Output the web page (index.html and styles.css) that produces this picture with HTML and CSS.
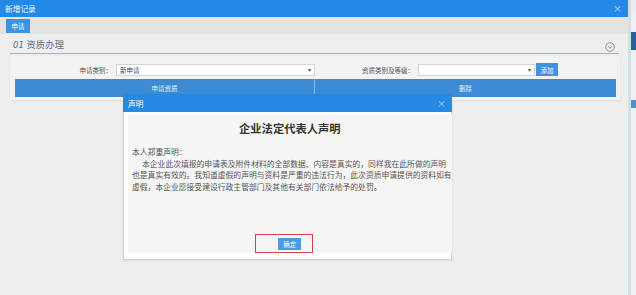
FILE: index.html
```html
<!DOCTYPE html>
<html lang="zh">
<head>
<meta charset="utf-8">
<title>新增记录</title>
<link rel="stylesheet" href="styles.css">
</head>
<body>
<div class="app">
  <div class="window">
    <div class="titlebar"><span>新增记录</span><span class="close">×</span></div>
    <div class="toolbar"><button class="btn-apply">申请</button></div>
    <div class="content">
      <div class="panel-head">
        <span class="panel-title"><i>01</i> 资质办理</span>
        <svg class="chev" width="10" height="10" viewBox="0 0 10 10"><circle cx="5" cy="5" r="4.3" fill="none" stroke="#6b8fb8" stroke-width="0.9"/><path d="M3 4.2 L5 6.2 L7 4.2" fill="none" stroke="#6b8fb8" stroke-width="0.9"/></svg>
      </div>
      <div class="panel-body">
        <div class="form-row">
          <label class="lbl lbl1">申请类别：</label>
          <div class="select sel1"><span>新申请</span><span class="arr">▾</span></div>
          <label class="lbl lbl2">资质类别及等级：</label>
          <div class="select sel2"><span></span><span class="arr">▾</span></div>
          <button class="btn-add">添加</button>
        </div>
        <div class="table-head">
          <div class="th th1">申请资质</div>
          <div class="th th2">删除</div>
        </div>
      </div>
    </div>
  </div>
  <div class="side">
    <div class="s-top"></div>
    <div class="s-gap1"></div>
    <div class="s-dark"></div>
    <div class="s-gap2"></div>
    <div class="s-mid"></div>
  </div>

  <div class="modal">
    <div class="modal-head"><span>声明</span><span class="close">×</span></div>
    <div class="modal-body">
      <div class="modal-inner">
        <h1 class="heading">企业法定代表人声明</h1>
        <div class="decl">
          <div class="line">本人郑重声明：</div>
          <div class="line indent">本企业此次填报的申请表及附件材料的全部数据、内容是真实的，同样我在此所做的声明</div>
          <div class="line">也是真实有效的。我知道虚假的声明与资料是严重的违法行为，此次资质申请提供的资料如有</div>
          <div class="line">虚假，本企业愿接受建设行政主管部门及其他有关部门依法给予的处罚。</div>
        </div>
        <div class="footer">
          <div class="mark"><button class="btn-ok">确定</button></div>
        </div>
      </div>
    </div>
  </div>
</div>
</body>
</html>
```

FILE: styles.css
```css
* { box-sizing: border-box; }
html, body { margin: 0; padding: 0; }
body {
  background: #eeeeee;
  font-family: "Noto Sans CJK SC", "Noto Sans", sans-serif;
  color: #333;
  width: 636px;
  height: 295px;
  overflow: hidden;
}
.app {
  position: relative;
  display: flex;
  width: 636px;
  height: 295px;
}
.window {
  width: 631px;
  height: 295px;
  border-right: 3px solid #cfe2e2;
  display: flex;
  flex-direction: column;
  background: #eeeeee;
}
.titlebar {
  height: 17px;
  background: #2389e7;
  color: #f2f7fd;
  font-size: 7.7px;
  display: flex;
  align-items: center;
  justify-content: space-between;
  padding: 0 6px 0 5px;
}
.titlebar .close { font-size: 9px; color: #cfe3f8; }
.toolbar {
  height: 17px;
  background: #e4e2e2;
  display: flex;
  align-items: center;
  padding-left: 6px;
}
button {
  border: 0;
  margin: 0;
  padding: 0;
  font-family: inherit;
  color: #fff;
  cursor: pointer;
}
.btn-apply {
  width: 24px;
  height: 14px;
  background: #3f93de;
  font-size: 6.5px;
}
.content {
  padding: 0 10px 0 10px;
}
.panel-head {
  height: 20px;
  border-bottom: 1px solid #a7b2bd;
  display: flex;
  align-items: center;
  justify-content: space-between;
  padding: 0 4px 0 3px;
  margin-right: -1px;
}
.panel-title {
  font-size: 9.2px;
  color: #5b6e86;
  letter-spacing: 0.2px;
}
.panel-title i { font-family: "DejaVu Sans", sans-serif; font-size: 8.5px; }
.chev { margin-top: 6px; }
.panel-body {
  margin-top: 2px;
  background: #f3f3f3;
  box-shadow: 0 1px 2px rgba(0,0,0,0.08);
  padding: 6px 4px 3px 5px;
  width: 610px;
}
.form-row {
  display: flex;
  align-items: center;
  height: 15px;
}
.lbl {
  font-size: 6.5px;
  color: #555;
  text-align: right;
}
.lbl1 { width: 97px; }
.lbl2 { width: 99px; }
.select {
  height: 12px;
  background: #fff;
  border: 1px solid #d4d4d4;
  display: flex;
  align-items: center;
  justify-content: space-between;
  font-size: 6.5px;
  color: #444;
  padding: 0 3px 0 3px;
}
.sel1 { width: 199px; margin-left: 4px; }
.sel2 { width: 117px; margin-left: 4px; }
.arr { font-size: 6px; color: #555; }
.btn-add {
  width: 22px;
  height: 13px;
  background: #3f93de;
  font-size: 6.5px;
  margin-left: 1px;
}
.table-head {
  margin-top: 2px;
  height: 18px;
  background: #3c8bd4;
  display: flex;
  width: 601px;
}
.th {
  color: #e7f0fa;
  font-size: 6.5px;
  display: flex;
  align-items: center;
  justify-content: center;
}
.th1 { width: 300px; border-right: 1px solid #8ab6e2; }
.th2 { flex: 1; }

.side {
  width: 5px;
  display: flex;
  flex-direction: column;
  background: #f1eff3;
}
.s-top { height: 11px; background: #e9edf3; }
.s-gap1 { height: 21px; }
.s-dark { height: 18px; background: #24609e; }
.s-gap2 { height: 50px; }
.s-mid { height: 8px; background: #4e8fcf; }

.modal {
  position: absolute;
  left: 123px;
  top: 94px;
  width: 329px;
  height: 166px;
  border: 1px solid #c4d4da;
  background: #fff;
  display: flex;
  flex-direction: column;
  box-shadow: 0 1px 2px rgba(0,0,0,0.08);
}
.modal-head {
  height: 18px;
  margin: -1px -1px 0 -1px;
  background: #2589e6;
  color: #fff;
  font-size: 7.7px;
  display: flex;
  align-items: center;
  justify-content: space-between;
  padding: 0 6px 0 5px;
}
.modal-head .close { font-size: 9px; color: #bcd9f5; }
.modal-body {
  flex: 1;
  padding: 2px 4px 6px 4px;
  display: flex;
}
.modal-inner {
  flex: 1;
  background: #f6f5f5;
  display: flex;
  flex-direction: column;
}
.heading {
  margin: 6px 0 0 0;
  font-size: 11.3px;
  line-height: 16px;
  font-weight: bold;
  text-align: center;
  color: #333;
}
.decl {
  margin-top: 10px;
  padding-left: 4px;
  font-size: 7.8px;
  line-height: 11.6px;
  color: #555;
}
.line { white-space: nowrap; }
.indent { text-indent: 10px; }
.footer {
  margin-top: auto;
  display: flex;
  justify-content: center;
}
.mark {
  width: 58px;
  height: 19px;
  border: 1.5px solid #d8434e;
  display: flex;
  align-items: center;
  padding-left: 22px;
  margin-left: -11px;
}
.btn-ok {
  width: 23px;
  height: 12px;
  background: #4b9ce3;
  font-size: 6.5px;
}
```
